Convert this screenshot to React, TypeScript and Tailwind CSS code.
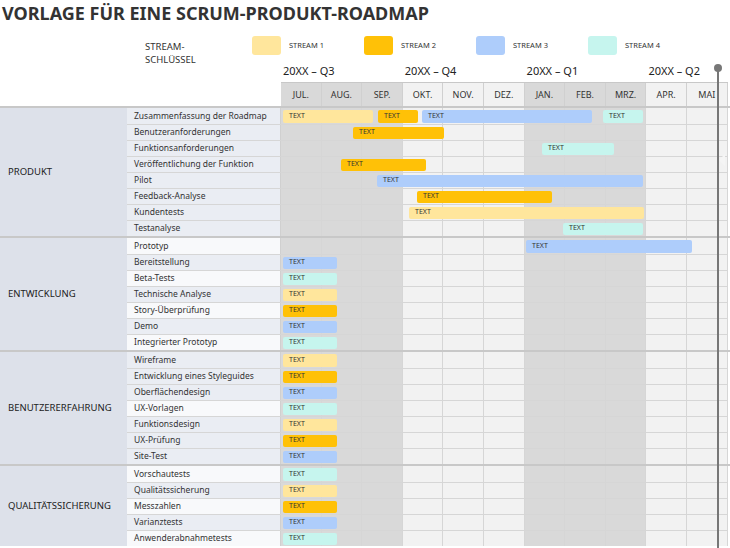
import React from "react";

const C: Record<number, string> = { 1: "bg-[#ffe69c]", 2: "bg-[#ffc107]", 3: "bg-[#aecdfb]", 4: "bg-[#c6f5ee]" };
const months = ["JUL.", "AUG.", "SEP.", "OKT.", "NOV.", "DEZ.", "JAN.", "FEB.", "MRZ.", "APR.", "MAI"];
const dark = (i: number) => i < 3 || (i >= 6 && i < 9);

type Bar = [number, number, number];
const groups: { name: string; rows: { t: string; bars: Bar[]; w?: boolean }[] }[] = [
  {
    name: "PRODUKT",
    rows: [
      { t: "Zusammenfassung der Roadmap", bars: [[283, 373, 1], [378, 418, 2], [422, 592, 3], [603, 643, 4]] },
      { t: "Benutzeranforderungen", bars: [[353, 444, 2]] },
      { t: "Funktionsanforderungen", bars: [[542, 614, 4]] },
      { t: "Veröffentlichung der Funktion", bars: [[341, 426, 2]] },
      { t: "Pilot", bars: [[377, 643, 3]] },
      { t: "Feedback-Analyse", bars: [[417, 552, 2]] },
      { t: "Kundentests", bars: [[409, 644, 1]] },
      { t: "Testanalyse", bars: [[563, 643, 4]] },
    ],
  },
  {
    name: "ENTWICKLUNG",
    rows: [
      { t: "Prototyp", bars: [[526, 692, 3]], w: true },
      { t: "Bereitstellung", bars: [[283, 337, 3]] },
      { t: "Beta-Tests", bars: [[283, 337, 4]], w: true },
      { t: "Technische Analyse", bars: [[283, 337, 1]] },
      { t: "Story-Überprüfung", bars: [[283, 337, 2]], w: true },
      { t: "Demo", bars: [[283, 337, 3]] },
      { t: "Integrierter Prototyp", bars: [[283, 337, 4]], w: true },
    ],
  },
  {
    name: "BENUTZERERFAHRUNG",
    rows: [
      { t: "Wireframe", bars: [[283, 337, 1]] },
      { t: "Entwicklung eines Styleguides", bars: [[283, 337, 2]] },
      { t: "Oberflächendesign", bars: [[283, 337, 3]] },
      { t: "UX-Vorlagen", bars: [[283, 337, 4]], w: true },
      { t: "Funktionsdesign", bars: [[283, 337, 1]] },
      { t: "UX-Prüfung", bars: [[283, 337, 2]] },
      { t: "Site-Test", bars: [[283, 337, 3]] },
    ],
  },
  {
    name: "QUALITÄTSSICHERUNG",
    rows: [
      { t: "Vorschautests", bars: [[283, 337, 4]], w: true },
      { t: "Qualitätssicherung", bars: [[283, 337, 1]] },
      { t: "Messzahlen", bars: [[283, 337, 2]], w: true },
      { t: "Varianztests", bars: [[283, 337, 3]] },
      { t: "Anwenderabnahmetests", bars: [[283, 337, 4]], w: true },
    ],
  },
];

const serif = "font-['DejaVu_Serif_Condensed','DejaVu_Serif',serif]";

export default function App() {
  return (
    <div className="relative w-[730px] h-[548px] bg-white overflow-hidden">
      <div className={`${serif} font-bold text-[18px] text-[#333] pl-[2px] pt-[1px] h-[30px] leading-[24px] whitespace-nowrap`}>
        VORLAGE FÜR EINE SCRUM-PRODUKT-ROADMAP
      </div>
      <div className="flex h-[52px]">
        <div className="w-[145px] shrink-0" />
        <div className="w-[107px] shrink-0 pt-[10px] text-[9.5px] leading-[13px] text-[#333] font-['Open_Sans',sans-serif]">
          STREAM-<br />SCHLÜSSEL
        </div>
        <div className="flex flex-col shrink-0">
          <div className="flex h-[26px] pt-[6px] items-start">
            {[1, 2, 3, 4].map((s) => (
              <div key={s} className="flex items-center w-[112px] shrink-0">
                <div className={`w-[29px] h-[19px] rounded-[3px] shrink-0 ${C[s]}`} />
                <div className="ml-[8px] text-[7.5px] text-[#333] font-['Open_Sans',sans-serif] whitespace-nowrap">STREAM {s}</div>
              </div>
            ))}
          </div>
          <div className="flex ml-[29px] h-[26px] pt-[7px]">
            {["20XX – Q3", "20XX – Q4", "20XX – Q1", "20XX – Q2"].map((q) => (
              <div key={q} className={`${serif} w-[121.8px] shrink-0 text-[11px] text-[#222] pl-[2px] whitespace-nowrap`}>{q}</div>
            ))}
          </div>
        </div>
      </div>
      <div className="flex">
        <div className="w-[281px] shrink-0" />
        <div className="flex h-[24px] border-t border-[#c8c8c8]">
          {months.map((m, i) => (
            <div key={m} className={`w-[40.6px] shrink-0 border-r border-[#d0d0d0] flex items-center justify-center ${serif} text-[9px] text-[#333] ${dark(i) ? "bg-[#d9d9d9]" : "bg-[#f2f2f2]"}`}>{m}</div>
          ))}
        </div>
      </div>
      <div className="border-t-2 border-[#c8c8c8]">
        {groups.map((g, gi) => (
          <div key={g.name} className={`flex ${gi > 0 ? "border-t-2 border-[#c8c8c8]" : ""}`}>
            <div className={`w-[127px] shrink-0 bg-[#dde1ea] flex items-center pl-[8px] ${serif} text-[9.5px] text-[#222]`}>{g.name}</div>
            <div className="flex flex-col">
              {g.rows.map((r, ri) => (
                <div key={r.t} className={`flex h-[16px] ${ri > 0 ? "border-t border-[#d6d6d6]" : ""}`}>
                  <div className={`w-[154px] shrink-0 pl-[7px] flex items-center whitespace-nowrap ${serif} text-[8.5px] text-[#333] border-r border-[#d0d0d0] ${r.w ? "bg-[#f8f9fb]" : "bg-[#eaedf3]"}`}>{r.t}</div>
                  <div className="relative flex">
                    {months.map((m, i) => (
                      <div key={m} className={`w-[40.6px] shrink-0 border-r border-[#d6d6d6] ${dark(i) ? "bg-[#d9d9d9]" : "bg-[#f2f2f2]"}`} />
                    ))}
                    {r.bars.map(([a, b, s], bi) => (
                      <div
                        key={bi}
                        className={`absolute top-[1.5px] bottom-[1.5px] rounded-[2px] ${C[s]} text-[7px] text-[#333] pl-[6px] flex items-center font-['Open_Sans',sans-serif]`}
                        style={{ left: a - 281, width: b - a }}
                      >
                        TEXT
                      </div>
                    ))}
                  </div>
                </div>
              ))}
            </div>
          </div>
        ))}
      </div>
      <div className="absolute left-[717px] top-[67px] w-[2px] h-[490px] bg-[#777]" />
      <div className="absolute left-[714px] top-[64px] w-[8px] h-[8px] rounded-full bg-[#777]" />
      <div className="absolute left-[719px] top-[154px] w-0 h-0 border-y-[6px] border-y-transparent border-r-[6px] border-r-[#f5f5f5]" />
    </div>
  );
}
